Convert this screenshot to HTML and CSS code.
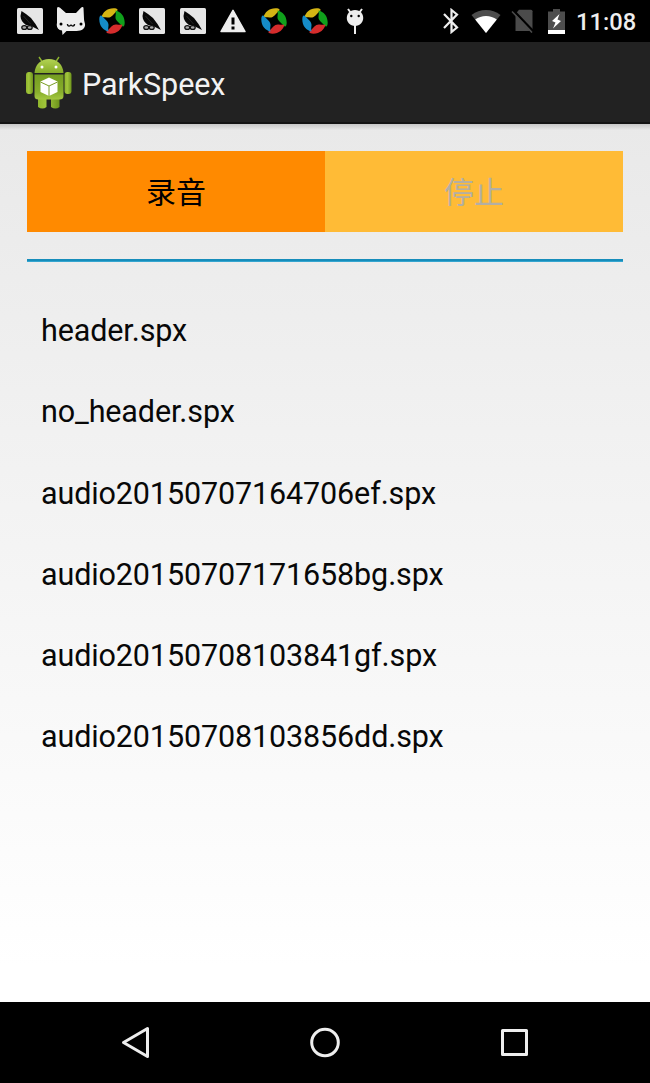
FILE: index.html
```html
<!DOCTYPE html>
<html lang="zh">
<head>
<meta charset="utf-8">
<title>ParkSpeex</title>
<link rel="stylesheet" href="styles.css">
</head>
<body>
<svg width="0" height="0" class="defs" aria-hidden="true">
  <defs>
    <symbol id="feather" viewBox="0 0 26 26">
      <rect width="26" height="26" rx="1.500" fill="#e6e6e6"/>
      <path d="M4.500 3L9 6l5 4 4.500 6 3.500 6-4-2-4-2-5-1C6 15 3.500 12 3.500 8z" fill="#080808"/>
      <path d="M6.500 8l7 8" stroke="#444" stroke-width=".5"/>
      <g fill="#aaa" stroke="#111" stroke-width="1.300"><ellipse cx="7.300" cy="19.500" rx="2.500" ry="1.900"/><ellipse cx="12.700" cy="19.500" rx="2.500" ry="1.900"/></g>
    </symbol>
    <path id="petal" d="M2.500 9.500C3.500 4.500 8 .3 14.500.3c4.500 0 5 1.700 2.800 3.400C14.500 6 12.500 10 8.500 9.500 6 9.200 4.500 9 2.500 9.500z"/>
    <symbol id="swirl" viewBox="0 0 26 26">
      <use href="#petal" fill="#d5b514"/>
      <use href="#petal" fill="#10a01c" transform="rotate(90 13 13)"/>
      <use href="#petal" fill="#d52c2c" transform="rotate(180 13 13)"/>
      <use href="#petal" fill="#158bc8" transform="rotate(270 13 13)"/>
    </symbol>
    <linearGradient id="limb" x1="0" x2="1" y1="0" y2="0"><stop offset="0" stop-color="#8fb52c"/><stop offset=".4" stop-color="#a2c63c"/><stop offset="1" stop-color="#6d931b"/></linearGradient>
    <linearGradient id="torso" x1="0" x2="0" y1="0" y2="1"><stop offset="0" stop-color="#749d20"/><stop offset=".7" stop-color="#88ae2c"/><stop offset="1" stop-color="#a3c742"/></linearGradient>
    <linearGradient id="head" x1="0" x2="0" y1="0" y2="1"><stop offset="0" stop-color="#b3d353"/><stop offset="1" stop-color="#86ac28"/></linearGradient>
  </defs>
</svg>
<div class="screen">
  <header class="status">
    <div class="notifications">
      <svg class="tile"><use href="#feather"/></svg>
      <svg class="cat" viewBox="0 0 30 28"><path d="M2 0Q1 0 1 2v14c-1 4 1 7 5 7.500l.5 4.500 4-4h10c6 0 9-3 8.500-7-.3-2-1-3-1-5L27.500 1C27.500-.3 26-.3 25 .8L20 6H10L4 .7Q3 0 2 0z" fill="#eee"/><circle cx="5" cy="17" r="1.500"/><circle cx="25" cy="17" r="1.500"/><path d="M11.500 17q0 2.300 1.800 2 1.500 0 1.700-1.500.2 1.500 1.800 1.500 1.700 0 1.700-2" fill="none" stroke="#111" stroke-width="1.400"/></svg>
      <svg class="tile"><use href="#swirl"/></svg>
      <svg class="tile"><use href="#feather"/></svg>
      <svg class="tile"><use href="#feather"/></svg>
      <svg class="warn" viewBox="0 0 26 24"><path d="M13 1.300L25 22.500H1z" fill="#eee" stroke="#eee" stroke-width="1.500" stroke-linejoin="round"/><path d="M13 8.500v7M13 17.500v3" stroke="#000" stroke-width="3"/></svg>
      <svg class="tile"><use href="#swirl"/></svg>
      <svg class="tile"><use href="#swirl"/></svg>
      <svg class="debug" viewBox="0 0 20 28"><path d="M3 2l3 4M17 2l-3 4M10 18v9" stroke="#eee" stroke-width="2"/><path d="M10 3C4.500 3 1.800 7 1.800 11S5 19 10 19s8.200-4 8.200-8S15.500 3 10 3z" fill="#eee"/><circle cx="6.300" cy="9" r="1.200"/><circle cx="13.700" cy="9" r="1.200"/></svg>
    </div>
    <div class="system">
      <svg width="18" height="26" viewBox="0 0 18 26"><path d="M2 6l13 13.500L9.500 24V2L15 6.500 2 20" fill="none" stroke="#eee" stroke-width="2.200"/></svg>
      <svg class="wifi" width="30" height="24" viewBox="0 0 30 24"><path d="M15 24L.5 6Q7 1 15 1t14.500 5z" fill="#4d4d4d"/><path d="M15 24L4.200 10.500Q9 7 15 7t10.800 3.500z" fill="#fff"/></svg>
      <svg class="sim" width="24" height="24" viewBox="0 0 24 24"><path d="M8 .7h12q1.500 0 1.500 1.500V22H4.500V5z" fill="#4b4b4b"/><path d="M2.500 1.500l20 21" stroke="#000" stroke-width="2.500"/><path d="M1 2.500l20 21" stroke="#4b4b4b" stroke-width="1.600"/></svg>
      <svg class="battery" width="17" height="25" viewBox="0 0 17 25"><path d="M5 0h7v2.500h5V21H0V2.500h5z" fill="#4d4d4d"/><path d="M0 21h17v4H0z" fill="#fff"/><path d="M11.500 5L4 12l3.500 1.500L5 19.500l8-7.500-3.500-1.500z" fill="#fff"/></svg>
      <span class="clock">11:08</span>
    </div>
  </header>
  <div class="appbar">
    <svg class="logo" width="46" height="54" viewBox="0 0 46 54">
      <path d="M13 1l4 6M33 1l-4 6" stroke="#8db32e" stroke-width="1.400"/>
      <path d="M8.500 17C9 8.500 15 3 23 3s14 5.500 14.500 14z" fill="url(#head)"/>
      <circle cx="16" cy="11" r="1.500" fill="#fff"/><circle cx="30" cy="11" r="1.500" fill="#fff"/>
      <rect x="0" y="16" width="7" height="22" rx="3" fill="url(#limb)"/><rect x="38.500" y="16" width="7" height="22" rx="3" fill="url(#limb)"/>
      <path d="M12 40h8.500v11q-4 3-8.500 0zM25 40h8.500v11q-4 3-8.500 0z" fill="url(#limb)"/>
      <path d="M8.500 18.500h29V40q0 3.500-4 3.500h-21q-4 0-4-3.500z" fill="url(#torso)"/>
      <path d="M23 21.500l8.500 4v10.500L23 40l-8.500-4V25.500z" fill="#fff"/>
      <path d="M14.500 26L23 30l8.500-4M23 30v10" fill="none" stroke="#789d24" stroke-width="1"/>
    </svg>
    <h1>ParkSpeex</h1>
  </div>
  <main>
    <div class="buttons">
      <button class="record">录音</button>
      <button class="stop" disabled>停止</button>
    </div>
    <div class="rule"></div>
    <ul class="files">
      <li>header.spx</li>
      <li>no_header.spx</li>
      <li>audio20150707164706ef.spx</li>
      <li>audio20150707171658bg.spx</li>
      <li>audio20150708103841gf.spx</li>
      <li>audio20150708103856dd.spx</li>
    </ul>
  </main>
  <nav>
    <svg viewBox="0 0 32 36"><path d="M27.500 3.500v28L3.500 17.500z"/></svg>
    <svg viewBox="0 0 32 36"><circle cx="16" cy="17.500" r="13.300"/></svg>
    <svg viewBox="0 0 32 36"><path d="M3.500 5.500h24v24h-24z"/></svg>
  </nav>
</div>
</body>
</html>
```

FILE: styles.css
```css
* { box-sizing: border-box; }
body { margin: 0; font-family: Roboto, "Noto Sans CJK SC", sans-serif; }
.defs { display: block; }
.screen { width: 650px; height: 1083px; display: flex; flex-direction: column; overflow: hidden; }
svg { flex: none; display: block; }

.status { height: 42px; background: #000; display: flex; justify-content: space-between; }
.notifications { display: grid; grid-template-columns: repeat(9, 40.630px); place-items: center; padding-left: 10px; }
.tile { width: 26px; height: 26px; }
.cat { width: 30px; height: 28px; }
.warn { width: 26px; height: 24px; }
.debug { width: 20px; height: 28px; }
.system { display: flex; align-items: center; padding-right: 14px; }
.wifi { margin-left: 11px; }
.sim { margin-left: 10px; }
.battery { margin-left: 13px; }
.clock { width: 60px; margin-left: 11px; color: #eee; font-size: 23.700px; font-weight: 500; line-height: 42px; padding-top: 2px; white-space: nowrap; }

.appbar { height: 82px; background: #222; border-bottom: 2px solid #141414; display: flex; align-items: center; padding-left: 26px; gap: 10px; }
.logo { margin-top: 2px; }
h1 { margin: 0; padding-top: 5px; color: #f3f3f3; font-size: 30.500px; letter-spacing: -.09px; font-weight: 400; line-height: 36px; }

main { height: 878px; padding: 27px 27px 0; background: linear-gradient(#c8c8c8 0, rgba(216, 216, 216, 0) 6px), linear-gradient(#e9e9e9, #fff 96%); }
.buttons { display: grid; grid-template-columns: 1fr 1fr; height: 81px; }
button { border: 0; padding: 0 0 3px; font: 400 30px "Noto Sans CJK SC", sans-serif; color: #000; }
.record { background: #ff8a00; }
.stop { background: #ffbb36; color: #b3afa4; }
.rule { height: 3px; margin-top: 27px; background: linear-gradient(#168dbb 66%, #35a5cf 66%); }
.files { list-style: none; margin: 28px 0 0; padding: 0 14px; }
.files li { height: 81.250px; line-height: 81.250px; font-size: 30.500px; letter-spacing: -.12px; color: #080808; }

nav { height: 81px; background: #000; display: grid; grid-template-columns: repeat(3, 189.500px); justify-content: center; place-items: center; }
nav svg { width: 32px; height: 36px; fill: none; stroke: #eee; stroke-width: 3; stroke-linejoin: round; }
```
